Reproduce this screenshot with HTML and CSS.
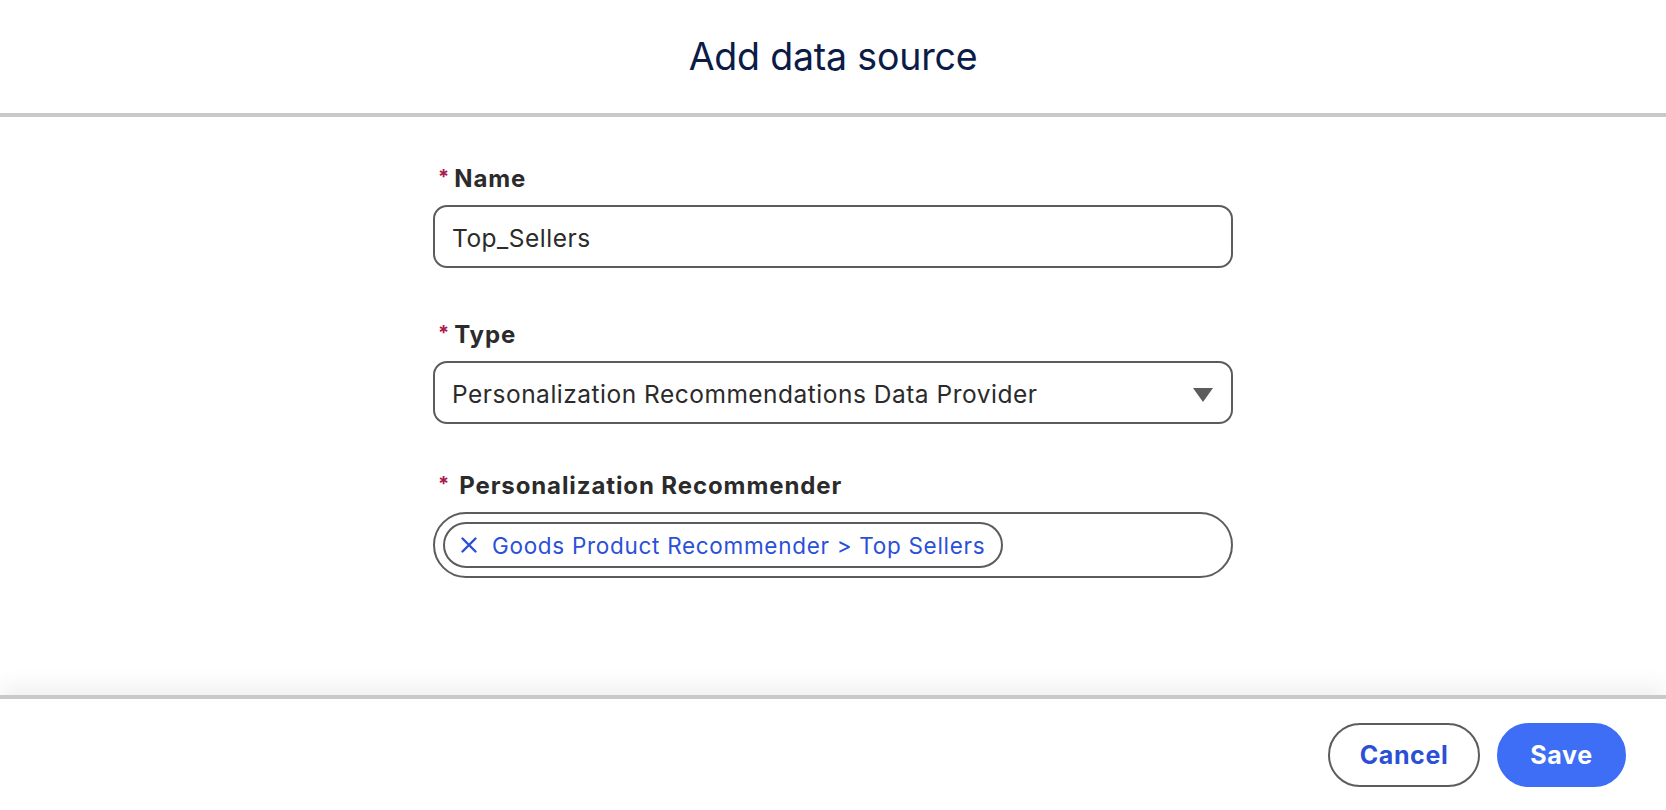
FILE: index.html
```html
<!DOCTYPE html>
<html lang="en">
<head>
<meta charset="utf-8">
<title>Add data source</title>
<link rel="stylesheet" href="styles.css">
</head>
<body>
<div class="modal">
  <header class="modal-header">
    <h1 class="modal-title">Add data source</h1>
  </header>
  <main class="modal-body">
    <form class="form">
      <div class="field">
        <label class="field-label"><abbr class="req">*</abbr>Name</label>
        <div class="input">Top_Sellers</div>
      </div>
      <div class="field">
        <label class="field-label"><abbr class="req">*</abbr>Type</label>
        <div class="input select">
          <span>Personalization Recommendations Data Provider</span>
          <svg class="caret" width="20" height="14" viewBox="0 0 20 14"><path d="M0 0H20L10 14Z" fill="#5c5c5c"/></svg>
        </div>
      </div>
      <div class="field field-last">
        <label class="field-label"><abbr class="req req-spaced">*</abbr>Personalization Recommender</label>
        <div class="pill-box">
          <span class="pill">
            <svg class="pill-x" width="16" height="16" viewBox="0 0 16 16"><path d="M1.5 1.5L14.5 14.5M14.5 1.5L1.5 14.5" stroke="#2b50d8" stroke-width="2.4" stroke-linecap="round"/></svg>
            <span class="pill-text">Goods Product Recommender &gt; Top Sellers</span>
          </span>
        </div>
      </div>
    </form>
  </main>
  <footer class="modal-footer">
    <button class="btn btn-neutral" type="button">Cancel</button>
    <button class="btn btn-brand" type="button">Save</button>
  </footer>
</div>
</body>
</html>
```
FILE: styles.css
```css
* { box-sizing: border-box; }
html, body { margin: 0; padding: 0; }
body {
  font-family: Inter, "Noto Sans", "Liberation Sans", sans-serif;
  background: #ffffff;
  color: #2e2e2e;
}
.modal {
  height: 810px;
  display: flex;
  flex-direction: column;
}
.modal-header {
  height: 117px;
  border-bottom: 4px solid #c9c9c9;
  display: flex;
  align-items: center;
  justify-content: center;
}
.modal-title {
  margin: 0;
  font-size: 37.5px;
  font-weight: 400;
  color: #0b1c46;
  letter-spacing: -0.2px;
}
.modal-body {
  flex: 1;
  padding-top: 48px;
}
.form {
  width: 800px;
  margin: 0 auto;
}
.field { margin-bottom: 53px; }
.field + .field.field-last { margin-top: -5px; }
.field-label {
  display: flex;
  align-items: flex-start;
  height: 28px;
  line-height: 28px;
  font-size: 24px;
  font-weight: 700;
  letter-spacing: 0.9px;
  color: #2b2b2b;
  margin: 0 0 12px 5px;
}
.req {
  text-decoration: none;
  color: #ab1a4b;
  font-weight: 700;
  font-size: 20px;
  line-height: 24px;
  letter-spacing: 0;
  margin-right: 5px;
}
.req-spaced { margin-right: 10px; }
.input {
  height: 63px;
  border: 2px solid #5c5c5c;
  border-radius: 14px;
  display: flex;
  align-items: center;
  padding: 2px 18px 0 17px;
  font-size: 24.5px;
  letter-spacing: 0.5px;
  color: #2b2b2b;
}
.select { justify-content: space-between; }
.caret { margin-top: 2px; }
.pill-box {
  height: 66px;
  border: 2px solid #5c5c5c;
  border-radius: 33px;
  display: flex;
  align-items: center;
  padding: 0 8px;
  margin-top: 1px;
}
.pill {
  height: 46px;
  border: 2px solid #5c5c5c;
  border-radius: 23px;
  display: inline-flex;
  align-items: center;
  gap: 15px;
  padding: 0 16px 0 16px;
  color: #2b50d8;
  font-size: 22.5px;
  letter-spacing: 0.7px;
}
.pill-x { flex: none; }
.modal-footer {
  height: 115px;
  border-top: 4px solid #c9c9c9;
  box-shadow: 0 -10px 20px rgba(0, 0, 0, 0.06);
  display: flex;
  align-items: center;
  justify-content: flex-end;
  gap: 17px;
  padding: 0 40px 0 0;
}
.btn {
  height: 64px;
  border-radius: 32px;
  font-family: Inter, "Noto Sans", "Liberation Sans", sans-serif;
  font-size: 25px;
  font-weight: 700;
  letter-spacing: 0.6px;
  cursor: pointer;
}
.btn-neutral {
  width: 152px;
  background: #ffffff;
  border: 2px solid #5c5c5c;
  color: #2b4fd6;
}
.btn-brand {
  width: 129px;
  background: #3d6ef5;
  border: 2px solid #3d6ef5;
  color: #ffffff;
}
```
